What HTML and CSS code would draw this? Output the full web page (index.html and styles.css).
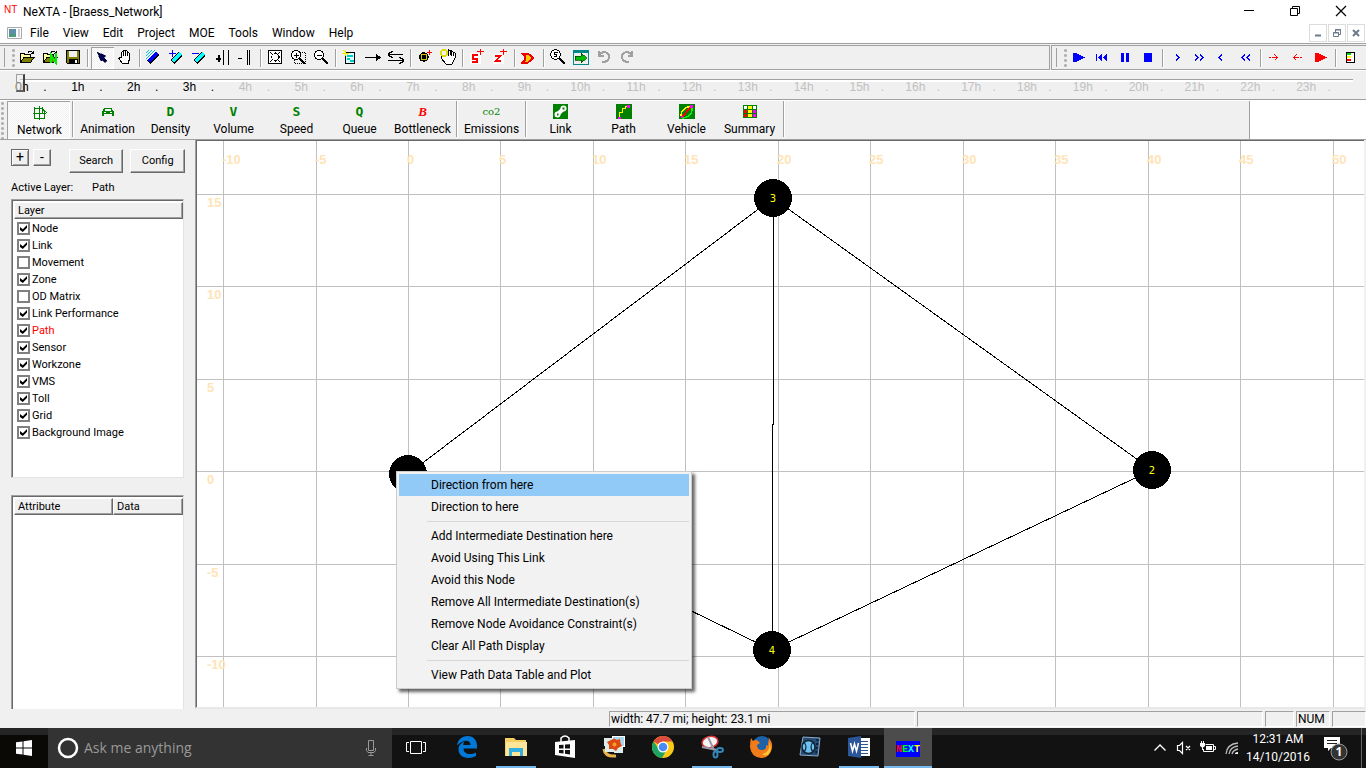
FILE: index.html
```html
<!DOCTYPE html>
<html lang="en">
<head>
<meta charset="utf-8">
<title>NeXTA - [Braess_Network]</title>
<link rel="stylesheet" href="styles.css">
</head>
<body>
<div class="desktop">
<header class="titlebar">
  <span class="app-mark">NT</span>
  <h1 class="title">NeXTA - [Braess_Network]</h1>
  <div class="win-buttons">
    <button aria-label="Minimize"><svg width="12" height="12" viewBox="0 0 12 12"><path d="M1 5.500H11" stroke="#000"/></svg></button>
    <button aria-label="Restore"><svg width="12" height="12" viewBox="0 0 12 12"><path d="M1.500 3.500H8.500V10.500H1.500ZM3.500 3V1.500H10.500V8.500H9" fill="none" stroke="#000"/></svg></button>
    <button aria-label="Close"><svg width="12" height="12" viewBox="0 0 12 12"><path d="M1 1L11 11M11 1L1 11" stroke="#000" stroke-width="1.200"/></svg></button>
  </div>
</header>
<nav class="menubar">
  <svg class="doc-icon" width="16" height="14" viewBox="0 0 16 14"><path d="M.5 1.500H14.500V12.500H.5Z" fill="#fff" stroke="#aaa"/><path d="M2 3H9V11H2Z" fill="#5f8fa8"/><path d="M2 8H9V11H2Z" fill="#4f9a78"/><path d="M11 3H13V11H11Z" fill="#ccd"/></svg>
  <button>File</button><button>View</button><button>Edit</button><button>Project</button><button>MOE</button><button>Tools</button><button>Window</button><button>Help</button>
  <div class="mdi-buttons">
    <button aria-label="Minimize document"><svg width="10" height="10" viewBox="0 0 10 10"><path d="M2 7.500H8" stroke="#6b7b8c" stroke-width="2"/></svg></button>
    <button aria-label="Restore document"><svg width="10" height="10" viewBox="0 0 10 10"><path d="M1.500 4.500H6.500V8.500H1.500ZM3.500 4V1.500H8.500V6.500H7M1 5H7M3 2H9" fill="none" stroke="#6b7b8c"/></svg></button>
    <button aria-label="Close document"><svg width="10" height="10" viewBox="0 0 10 10"><path d="M2 2L8 8M8 2L2 8" stroke="#6b7b8c" stroke-width="2"/></svg></button>
  </div>
</nav>
<div class="rebar">
  <div class="band band-main" role="toolbar" aria-label="Standard">
    <span class="grip"></span>
    <button aria-label="Open"><svg viewBox="0 0 16 16"><path d="M1.500 13V4.500H5L6 5.500H11V8" fill="#ffff9c" stroke="#000"/><path d="M1.500 13.500L5 8.500H15L11.500 13.500Z" fill="#808000" stroke="#000"/><path d="M9 3.500C10 1.500 12.500 1.500 14 4M14.500 1.500V4.500H11.500" fill="none" stroke="#000"/></svg></button>
    <button aria-label="Open network"><svg viewBox="0 0 16 16"><path d="M1.500 13V4.500H5L6 5.500H11V8" fill="#ffff9c" stroke="#000"/><path d="M1.500 13.500L5 8.500H15L11.500 13.500Z" fill="#808000" stroke="#000"/><path d="M9 3.500C10 1.500 12.500 1.500 14 4M14.500 1.500V4.500H11.500" fill="none" stroke="#000"/><path d="M8.500 14V5L13.500 13V4" fill="none" stroke="#0e0" stroke-width="2"/></svg></button>
    <button aria-label="Save"><svg viewBox="0 0 16 16"><path d="M1.500 1.500H14.500V14.500H2.500L1.500 13.500Z" fill="#808000" stroke="#000"/><path d="M4 2H12V8H4Z" fill="#eee"/><path d="M4 10H13V15H4Z"/><path d="M10 11H12V14H10Z" fill="#fff"/></svg></button>
    <i class="sep"></i>
    <button class="on" aria-label="Select"><svg viewBox="0 0 16 16"><path d="M3 3L12 7L10 8.500L13 12L11 13.500L8.500 10.500L7 12Z" fill="#000050" stroke="#000030" stroke-width=".5"/></svg></button>
    <button aria-label="Pan"><svg viewBox="0 0 16 16"><path d="M4.500 9V3.500Q5.500 2 6.500 3.500V7V2Q7.500 .5 8.500 2V7V2.500Q9.500 1 10.500 2.500V7V4.500Q11.500 3 12.500 4.500V10L11 14.500H5.500L2 9.500Q1.500 7.500 4.500 9" fill="#fff" stroke="#000"/></svg></button>
    <i class="sep"></i>
    <button aria-label="Draw link"><svg viewBox="0 0 16 16"><path d="M0 10L9 1M0 7L6 1M0 4L3 1" stroke="#0cd" fill="none"/><path d="M2.500 13.500L11.500 4.500" stroke="#000" stroke-width="5"/><path d="M2.500 12.500L11 4" stroke="#00f" stroke-width="3"/></svg></button>
    <button aria-label="Add link"><svg viewBox="0 0 16 16"><path d="M0 4.500H7M3.500 1V8" stroke="#00f"/><path d="M3.500 13L11.500 5" stroke="#000" stroke-width="5"/><path d="M3.500 12.500L11.500 4.500" stroke="#0ff" stroke-width="3"/></svg></button>
    <button aria-label="Remove link"><svg viewBox="0 0 16 16"><path d="M0 4.500H7" stroke="#00f"/><path d="M3.500 13L11.500 5" stroke="#000" stroke-width="5"/><path d="M3.500 12.500L11.500 4.500" stroke="#0ff" stroke-width="3"/></svg></button>
    <button aria-label="Add lane"><svg viewBox="0 0 16 16"><path d="M1 9.500H6M3.500 6V13" stroke="#000" stroke-width="2"/><path d="M8.500 1V16M13.500 1V16" stroke="#000"/></svg></button>
    <button aria-label="Remove lane"><svg viewBox="0 0 16 16"><path d="M0 9.500H4" stroke="#000"/><path d="M9.500 1V16M11.500 1V16" stroke="#000"/></svg></button>
    <i class="sep"></i>
    <button aria-label="Fit"><svg viewBox="0 0 16 16"><path d="M1.500 1.500H14.500V14.500H1.500Z" fill="#fff" stroke="#000" stroke-width="1.500"/><path d="M8 3L10 5H6ZM8 13L10 11H6ZM3 8L5 6V10ZM13 8L11 6V10Z"/><path d="M3 3L6 6M13 3L10 6M3 13L6 10M13 13L10 10" stroke="#000"/></svg></button>
    <button aria-label="Zoom in"><svg viewBox="0 0 16 16"><path d="M4 3.500H15.500V14.500H4.500V11" fill="none" stroke="#000" stroke-dasharray="1 1"/><circle cx="6" cy="6" r="4.500" fill="#fff" stroke="#000"/><path d="M3.500 6.500H8.500M6.500 3.500V8.500" stroke="#000"/><path d="M9.500 9.500L15 15" stroke="#000" stroke-width="2"/></svg></button>
    <button aria-label="Zoom out"><svg viewBox="0 0 16 16"><circle cx="6" cy="6" r="4.500" fill="#fff" stroke="#000"/><path d="M3.500 6.500H8.500" stroke="#000"/><path d="M9.500 9.500L15 15" stroke="#000" stroke-width="2"/></svg></button>
    <i class="sep"></i>
    <button aria-label="New node"><svg viewBox="0 0 16 16"><path d="M3.500 3.500H12.500V14.500H3.500Z" fill="#dff" stroke="#000"/><path d="M5 7H11M5 10H8M8 12H12" stroke="#0cc" stroke-width="2"/><path d="M0 4H7M3.500 1V7M1 1L6 6" stroke="#ee0"/></svg></button>
    <button aria-label="One way"><svg viewBox="0 0 16 16"><path d="M0 8.500H13" stroke="#000" stroke-width="1.500"/><path d="M10.500 4.500L16 8.500L10.500 12.500Z"/></svg></button>
    <button aria-label="Two way"><svg viewBox="0 0 16 16"><path d="M0 5.500H15M0 11.500H15M4.500 2L0 5.500L4.500 9M11.500 8L16 11.500L11.500 15" fill="none" stroke="#000" stroke-width="1.400"/></svg></button>
    <i class="sep"></i>
    <button aria-label="Add zone"><svg viewBox="0 0 16 16"><path d="M6.500 2.500L9 4L11 5L12 8L10.500 11L7 13L3 11.500L1.500 8L3 5Z" fill="#000"/><circle cx="7" cy="8" r="3" fill="none" stroke="#cc0"/><path d="M10 3.500H15M12.500 1V6" stroke="#f00"/></svg></button>
    <button aria-label="Move node"><svg viewBox="0 0 16 16"><path d="M4 8L1 6V9L6 15H12L15 9V4L13 3V7M13 7V3L11 1.500V7M10.500 6V2L8.500 1L8 7" fill="#fff" stroke="#000"/><circle cx="4" cy="4" r="3" fill="none" stroke="#dd0" stroke-width="1.500"/></svg></button>
    <i class="sep"></i>
    <button aria-label="Add sensor"><svg viewBox="0 0 16 16"><path d="M1 4H12V15H1Z" fill="#fff"/><path d="M9 6H4V9.500H8V13H3" fill="none" stroke="#f00" stroke-width="2"/><path d="M8 2.500H15M11.500 0V6" stroke="#f00"/></svg></button>
    <button aria-label="Add zone label"><svg viewBox="0 0 16 16"><path d="M1 5H12V15H1Z" fill="#fff"/><path d="M3 7H8L4 12H9" fill="none" stroke="#f00" stroke-width="2"/><path d="M8 2.500H15M11.500 0V6" stroke="#f00"/></svg></button>
    <i class="sep"></i>
    <button aria-label="Subarea"><svg viewBox="0 0 16 16"><path d="M1 4.500H7L12 9L7 13.500H1L4 11V7Z" fill="#fc0" stroke="#e00" stroke-width="2"/></svg></button>
    <i class="sep"></i>
    <button aria-label="Find"><svg viewBox="0 0 16 16"><circle cx="5.500" cy="5.500" r="4.800" fill="#fff" stroke="#000"/><path d="M7.500 3.500H4.500V5.500H6.500V7.500H4" fill="none" stroke="#000"/><path d="M9.500 9.500L15 15" stroke="#000" stroke-width="2"/></svg></button>
    <button aria-label="Go"><svg viewBox="0 0 16 16"><path d="M.5 1.500H15.500V15.500H.5Z" fill="#eee" stroke="#088"/><path d="M1 3H15" stroke="#088" stroke-width="2"/><path d="M2 7H8V4L14 9L8 14V11H2Z" fill="#0b0" stroke="#030" stroke-width=".7"/></svg></button>
    <button aria-label="Undo"><svg viewBox="0 0 16 16"><path d="M3 2V6.500H7.500M3.500 6C6 2 13 2 13 8Q12.500 13 6 13" fill="none" stroke="#a0a0a0" stroke-width="2"/></svg></button>
    <button aria-label="Redo"><svg viewBox="0 0 16 16"><path d="M13 2V6.500H8.500M12.500 6C10 2 3 2 3 8Q3.500 13 10 13" fill="none" stroke="#a0a0a0" stroke-width="2"/></svg></button>
  </div>
  <div class="band band-play" role="toolbar" aria-label="Playback">
    <span class="grip"></span>
    <button aria-label="Play"><svg viewBox="0 0 16 16"><path d="M2 4H5L14 8.500L5 13H2Z" fill="#00f"/></svg></button>
    <button aria-label="Rewind"><svg viewBox="0 0 16 16"><path d="M2.500 5V12" stroke="#00f"/><path d="M8 5V12L4 8.500ZM13 5V12L9 8.500Z" fill="#00f"/></svg></button>
    <button aria-label="Pause"><svg viewBox="0 0 16 16"><path d="M4 4H7V13H4ZM9 4H12V13H9Z" fill="#00f"/></svg></button>
    <button aria-label="Stop"><svg viewBox="0 0 16 16"><path d="M4 4H12V13H4Z" fill="#00f"/></svg></button>
    <i class="sep"></i>
    <button aria-label="Forward"><svg viewBox="0 0 16 16"><path d="M7 5.500L10 8.500L7 11.500" fill="none" stroke="#00f" stroke-width="1.500"/></svg></button>
    <button aria-label="Fast forward"><svg viewBox="0 0 16 16"><path d="M3 5.500L6 8.500L3 11.500M8 5.500L11 8.500L8 11.500" fill="none" stroke="#00f" stroke-width="1.500"/></svg></button>
    <button aria-label="Back"><svg viewBox="0 0 16 16"><path d="M7 5.500L4 8.500L7 11.500" fill="none" stroke="#00f" stroke-width="1.500"/></svg></button>
    <button aria-label="Fast back"><svg viewBox="0 0 16 16"><path d="M7 5.500L4 8.500L7 11.500M12 5.500L9 8.500L12 11.500" fill="none" stroke="#00f" stroke-width="1.500"/></svg></button>
    <i class="sep"></i>
    <button aria-label="Next step"><svg viewBox="0 0 16 16"><path d="M2 8.500H4M5 8.500H10M7.500 5.500L10.500 8.500L7.500 11.500" fill="none" stroke="#f00" stroke-width="1.400"/></svg></button>
    <button aria-label="Previous step"><svg viewBox="0 0 16 16"><path d="M12 8.500H10M9 8.500H4M6.500 5.500L3.500 8.500L6.500 11.500" fill="none" stroke="#f00" stroke-width="1.400"/></svg></button>
    <button aria-label="Record"><svg viewBox="0 0 16 16"><path d="M2 4H5L14 8.500L5 13H2Z" fill="#f00"/></svg></button>
    <i class="sep"></i>
    <button aria-label="Signal"><svg viewBox="0 0 16 16"><path d="M4 3.500H12V13.500H4Z" fill="#fff" stroke="#000"/><path d="M5 4H9V6H5Z" fill="#0d0"/><path d="M5 7H9V9H5Z" fill="#ff0"/><path d="M5 10H9V12H5Z" fill="#f00"/></svg></button>
  </div>
</div>
<div class="timeband">
  <ol class="hours" id="hours"></ol>
  <input type="range" min="0" max="24" value="0" aria-label="Time of day">
</div>
<div class="viewbar">
  <div class="viewtools" role="toolbar" aria-label="Views">
    <button class="on"><svg viewBox="0 0 16 16"><path d="M2.500 2V14M7.500 1V15M12.500 6V14M1 8.500H14M2 13.500H13M3 3.500H10L15 8M10.500 2V8" fill="none" stroke="#008000"/></svg>Network</button>
    <i class="sep"></i>
    <button><svg viewBox="0 0 16 16"><path d="M4 4H12L13 7H14V12H12V10H4V12H2V7H3Z" fill="#008000"/><path d="M5 5H11V7H5ZM4 8H6V9H4ZM10 8H12V9H10Z" fill="#f0f0f0"/></svg>Animation</button>
    <button><b class="glyph">D</b>Density</button>
    <button><b class="glyph">V</b>Volume</button>
    <button><b class="glyph">S</b>Speed</button>
    <button><b class="glyph">Q</b>Queue</button>
    <button><b class="glyph red">B</b>Bottleneck</button>
    <i class="sep"></i>
    <button><span class="glyph co">co2</span>Emissions</button>
    <i class="sep"></i>
    <button><svg viewBox="0 0 16 16"><path d="M0 0H15V15H0Z" fill="#008000"/><g shape-rendering="auto"><path d="M4.500 10.500L10.500 4.500" stroke="#fff" stroke-width="4"/><circle cx="10.500" cy="4.500" r="3" fill="#fff"/><circle cx="4.500" cy="10.500" r="3" fill="#fff"/><path d="M9.500 4.500H11.500M4 10.500H5.500" stroke="#008000" stroke-width="2"/></g></svg>Link</button>
    <button><svg viewBox="0 0 16 16"><path d="M0 0H16V15H0Z" fill="#008000"/><path d="M3.500 13V8.500H6.500V4.500H9.500V2.500H11" fill="none" stroke="#ff0"/><path d="M11 1H14V4H11ZM2 13H5V15H2Z" fill="#f0f"/></svg>Path</button>
    <button><svg viewBox="0 0 16 16"><path d="M0 0H16V15H0Z" fill="#008000"/><path d="M2 12Q2 4 12 2" fill="none" stroke="#ff0" stroke-width="1.500"/><path d="M3 13L12 3" stroke="#f00" stroke-width="2"/><path d="M3 14Q14 13 13 3" fill="none" stroke="#0f0" stroke-width="1.500"/><path d="M11 1H14V4H11ZM2 12H4V14H2Z" fill="#f0f"/></svg>Vehicle</button>
    <button><svg viewBox="0 0 16 16"><path d="M1 1H15V14H1Z" fill="#fff"/><path d="M6 1H10V14H6Z" fill="#ff0"/><path d="M1 5H6V14H1Z" fill="#f00"/><path d="M10 5H15V14H10Z" fill="#f0f"/><path d="M1.500 1.500H14.500V13.500H1.500ZM5.500 1V14M10.500 1V14M1 5.500H15M1 9.500H15" fill="none" stroke="#008000"/></svg>Summary</button>
    <i class="sep"></i>
  </div>
</div>
<main class="work">
  <aside class="sidebar">
    <div class="side-tools">
      <button class="push small default">+</button><button class="push small">-</button>
      <button class="push wide">Search</button><button class="push wide">Config</button>
    </div>
    <p class="active-layer"><span>Active Layer:</span><span>Path</span></p>
    <div class="listbox layers">
      <div class="list-head">Layer</div>
      <label><input type="checkbox" checked>Node</label>
      <label><input type="checkbox" checked>Link</label>
      <label><input type="checkbox">Movement</label>
      <label><input type="checkbox" checked>Zone</label>
      <label><input type="checkbox">OD Matrix</label>
      <label><input type="checkbox" checked>Link Performance</label>
      <label class="current"><input type="checkbox" checked>Path</label>
      <label><input type="checkbox" checked>Sensor</label>
      <label><input type="checkbox" checked>Workzone</label>
      <label><input type="checkbox" checked>VMS</label>
      <label><input type="checkbox" checked>Toll</label>
      <label><input type="checkbox" checked>Grid</label>
      <label><input type="checkbox" checked>Background Image</label>
    </div>
    <div class="listbox attributes">
      <table><thead><tr><th>Attribute</th><th>Data</th></tr></thead></table>
    </div>
  </aside>
  <section class="canvas">
    <svg class="map" role="img" aria-label="Braess network">
      <g transform="translate(-197 -141)">
        <g id="grid" class="grid"></g>
        <g class="links">
          <path d="M408 474L773 198L1152 470L772 650L408 474M773.500 198V424L772.500 425V650"/>
        </g>
        <g class="nodes">
          <circle cx="408" cy="474" r="19"/><circle cx="773" cy="198" r="19"/><circle cx="1152" cy="470" r="19"/><circle cx="772" cy="650" r="19"/>
          <text x="773" y="202">3</text><text x="1152" y="474">2</text><text x="772" y="654">4</text>
        </g>
      </g>
    </svg>
    <div class="context-menu" role="menu">
      <button role="menuitem" class="hot">Direction from here</button>
      <button role="menuitem">Direction to here</button>
      <hr>
      <button role="menuitem">Add Intermediate Destination here</button>
      <button role="menuitem">Avoid Using This Link</button>
      <button role="menuitem">Avoid this Node</button>
      <button role="menuitem">Remove All Intermediate Destination(s)</button>
      <button role="menuitem">Remove Node Avoidance Constraint(s)</button>
      <button role="menuitem">Clear All Path Display</button>
      <hr>
      <button role="menuitem">View Path Data Table and Plot</button>
    </div>
  </section>
</main>
<footer class="statusbar">
  <span class="pane size">width: 47.7 mi; height: 23.1 mi</span><span class="pane grow"></span><span class="pane key"></span><span class="pane num">NUM</span><span class="pane num"></span>
</footer>
<div class="taskbar">
  <button class="start" aria-label="Start"><svg width="16" height="16" viewBox="0 0 16 16"><path d="M0 2.300L6.500 1.400V7.500H0ZM7.500 1.200L16 0V7.500H7.500ZM0 8.500H6.500V14.600L0 13.700ZM7.500 8.500H16V16L7.500 14.800Z" fill="#fff"/></svg></button>
  <div class="cortana">
    <svg width="22" height="22" viewBox="0 0 22 22"><circle cx="11" cy="11" r="9" fill="none" stroke="#fff" stroke-width="2.500"/></svg>
    <input type="text" placeholder="Ask me anything" aria-label="Ask me anything">
    <svg width="12" height="18" viewBox="0 0 12 18"><path d="M3.500 1.500H8.500V11.500H3.500ZM1.500 9V11.500L3 13.500H9L10.500 11.500V9M6 14V16.500M3.500 16.500H8.500" fill="none" stroke="#999"/></svg>
  </div>
  <div class="apps">
    <button class="taskview" aria-label="Task view"><svg width="20" height="16" viewBox="0 0 20 16"><path d="M4.500 2.500H15.500V14.500H4.500ZM3 3.500H.5V12.500H3M17 3.500H19.500V12.500H17" fill="none" stroke="#fff"/></svg></button>
    <button aria-label="Edge"><svg width="24" height="24" viewBox="0 0 24 24"><path d="M2 10.500C3 4.500 7 1 12.500 1C19 1 22 6 22 10.500V13.500H8.500C8.500 19 15 20.500 21 17.500V21C13 25 3.500 22.500 3.500 14.500C3.500 10.500 6 8 9.500 6.500C8.600 7.500 8.400 8.800 8.300 10H15.500C15.500 4.500 8 4 2 10.500Z" fill="#0078d7"/></svg></button>
    <button class="running" aria-label="File Explorer"><svg width="24" height="24" viewBox="0 0 24 24"><path d="M1 3H10L12 5H22V21H1Z" fill="#f6cf63"/><path d="M2 7H23V21H2Z" fill="#ffe59a"/><path d="M5 21V13H19V21H16V17H8V21Z" fill="#35aee0"/></svg></button>
    <button aria-label="Store"><svg width="24" height="24" viewBox="0 0 24 24"><path d="M8 7V3Q12-1 16 3V7" fill="none" stroke="#fff" stroke-width="1.500"/><path d="M2 7L22 5V23L2 20Z" fill="#fff"/><path d="M6 10L10.500 9.700V13.500H6ZM12 9.600L17 9.200V13.500H12ZM6 15H10.500V18.500L6 18ZM12 15H17V19.500L12 18.700Z" fill="#111"/></svg></button>
    <button aria-label="Photo Gallery"><svg width="24" height="24" viewBox="0 0 24 24"><path d="M2 14Q3 22 14 21" fill="none" stroke="#e9b54a" stroke-width="3"/><path d="M2 3H13V11H2ZM12 10H21V18H12ZM3 10H12V17H3Z" fill="#dcecea"/><path d="M10 1H23V12H10Z" fill="#fff"/><path d="M11 2H22V11H11Z" fill="#a8d4ec"/><path d="M9 5L12 3.500L15 5L18 4L18.500 8L20 11L16 13L14 16L11 14L7 14L7 10L5 7Z" fill="#dc4a12"/><circle cx="12.500" cy="9.500" r="2" fill="#f9a02c"/></svg></button>
    <button aria-label="Chrome"><svg width="24" height="24" viewBox="0 0 24 24"><circle cx="12" cy="12" r="11" fill="#fbc916"/><path d="M12 12L2.500 6.500A11 11 0 0 1 21.500 6.500H12Z" fill="#dd4b3e"/><path d="M2.500 6.500A11 11 0 0 0 11 23L16 14H8Z" fill="#1da462"/><circle cx="12" cy="12" r="5.500" fill="#fff"/><circle cx="12" cy="12" r="4.300" fill="#4a8af4"/></svg></button>
    <button class="running" aria-label="Snipping Tool"><svg width="24" height="24" viewBox="0 0 24 24"><ellipse cx="10" cy="7" rx="8" ry="5.500" fill="#f5f5f5" stroke="#d33" stroke-width="1.500" transform="rotate(-12 10 7)"/><path d="M8 2L14 15M2 12L17 15" stroke="#99a" stroke-width="2"/><ellipse cx="20" cy="15" rx="3" ry="2" fill="none" stroke="#38b" stroke-width="2"/><ellipse cx="15.500" cy="19.500" rx="2" ry="3" fill="none" stroke="#38b" stroke-width="2"/></svg></button>
    <button aria-label="Firefox"><svg width="24" height="24" viewBox="0 0 24 24"><circle cx="13" cy="11" r="10" fill="#1d62a8"/><path d="M2 3L4 6Q7 4 9 6L11 8L8 10Q8 15 13 15Q18 15 17 10Q20 12 19 7Q21 5 19 2Q24 7 23 13Q21 23 12 23Q2 22 1 12Q1 7 2 3Z" fill="#f07b18"/><path d="M20 7Q22 17 13 19Q18 23 21 17Q23 13 20 7Z" fill="#fdc52f"/></svg></button>
    <button aria-label="Media"><svg width="24" height="24" viewBox="0 0 24 24"><path d="M5 2L22 3L20 21L2 20Z" fill="#294d72" stroke="#8ac" stroke-width="1"/><circle cx="10.500" cy="12" r="6.500" fill="#6bc1ef" stroke="#123" stroke-width="1.500"/><path d="M6 7Q10 12 6 17M15 7Q11 12 15 17" fill="none" stroke="#123" stroke-width="1.200"/><path d="M19.500 4L18 20" stroke="#0b1c3c" stroke-width="2" stroke-dasharray="2 2"/></svg></button>
    <button class="running" aria-label="Word"><svg width="24" height="24" viewBox="0 0 24 24"><path d="M12 3H23V21H12Z" fill="#fff"/><path d="M14 6.500H21M14 9.500H21M14 12.500H21M14 15.500H21M14 18.500H21" stroke="#2b579a"/><path d="M1 3L14 1V23L1 21Z" fill="#2b579a"/><path d="M3.500 8L5.500 16L7.500 9L9.500 16L11.500 8" fill="none" stroke="#fff" stroke-width="1.600"/></svg></button>
    <button class="running focused" aria-label="NeXTA"><span class="next"><b>N</b><b>E</b><b>X</b><b>T</b></span></button>
  </div>
  <div class="tray">
    <button aria-label="Show hidden icons"><svg width="16" height="16" viewBox="0 0 16 16"><path d="M2.500 10.500L8 5L13.500 10.500" fill="none" stroke="#fff" stroke-width="1.400"/></svg></button>
    <button aria-label="Volume muted"><svg width="16" height="16" viewBox="0 0 16 16"><path d="M1.500 5.500H3.500L6.500 2.500V13.500L3.500 10.500H1.500ZM10 6L14 10M14 6L10 10" fill="none" stroke="#fff" stroke-width="1.200"/></svg></button>
    <button aria-label="Battery"><svg width="18" height="16" viewBox="0 0 18 16"><path d="M6.500 4.500H14.500V11.500H4.500V9M15 6.500H16.500V9.500H15" fill="none" stroke="#fff"/><path d="M7 6H13V10H7Z" fill="#fff"/><path d="M2.500 1V3M4.500 1V3" fill="none" stroke="#fff"/><path d="M1 3H6V6L4 7.500V10H3V7.500L1 6Z" fill="#fff"/></svg></button>
    <button aria-label="Wireless"><svg width="16" height="16" viewBox="0 0 16 16"><path d="M2 14Q3 4 14 3M5 14Q6 7 14 6M8 14Q9 10 14 9" fill="none" stroke="#bbb" stroke-width="1.300"/><path d="M11 14Q11 12 14 12V14Z" fill="#fff"/></svg></button>
    <time class="clock"><span>12:31 AM</span><span>14/10/2016</span></time>
    <button class="notes" aria-label="Notifications"><svg width="26" height="28" viewBox="0 0 26 28"><path d="M1 3H17V14H8L5 17V14H1Z" fill="#fff"/><path d="M4 6.500H14M4 9.500H14" stroke="#222"/><circle cx="16" cy="18" r="8" fill="#333" stroke="#999"/><text x="16" y="22" text-anchor="middle" class="badge">1</text></svg></button>
  </div>
</div>
</div>
<script src="main.js"></script>
</body>
</html>
```

FILE: styles.css
```css
* { box-sizing: border-box; }
body { margin: 0; font: 12px/16px Roboto, "Noto Sans", sans-serif; color: #000; }
button { border: 0; padding: 0; margin: 0; background: none; font: inherit; color: inherit; }
svg { display: block; }
.desktop { display: flex; flex-direction: column; height: 100vh; background: #f0f0f0; overflow: hidden; }

.titlebar { display: flex; align-items: center; height: 22px; background: #fff; padding-left: 4px; }
.app-mark { width: 19px; font: 10px/12px "Liberation Sans", sans-serif; color: #f00; padding-bottom: 3px; }
.title { margin: 0; font-size: 12px; font-weight: 400; line-height: 20px; padding-top: 2px; }
.win-buttons { display: flex; margin-left: auto; padding-right: 2px; }
.win-buttons button { width: 46px; height: 20px; display: grid; place-items: center; }

.menubar { display: flex; align-items: center; height: 21px; background: #fff; padding-left: 7px; }
.menubar > button { padding: 0 7px; height: 19px; }
.mdi-buttons { display: flex; gap: 1px; margin-left: auto; padding-right: 1px; }
.mdi-buttons button { width: 18px; height: 18px; border: 1px solid #dcdcdc; display: grid; place-items: center; }

.rebar { display: flex; border-top: 1px solid #a0a0a0; border-bottom: 1px solid #fff; padding-top: 1px; }
.band { display: flex; align-items: center; height: 25px; border-top: 1px solid #a0a0a0; border-bottom: 1px solid #a0a0a0; }
.band-main { flex: 1; border-right: 1px solid #a0a0a0; margin-right: 1px; }
.band-play { border-left: 1px solid #a0a0a0; width: 315px; }
.grip { width: 12px; height: 19px; margin-left: 4px; border-left: 1px solid #a0a0a0; background: radial-gradient(circle, #b0b0b0 1px, transparent 2px) 6px 0 / 5px 5px repeat-y; }
.band button { width: 23px; height: 22px; display: grid; place-items: start; padding: 2px 0 0 3px; flex: none; }
.band svg { width: 16px; height: 16px; shape-rendering: crispEdges; }
.on { background: repeating-conic-gradient(#fff 0 25%, #f0f0f0 0 50%) 0 0 / 2px 2px; box-shadow: inset 1px 1px #a0a0a0, inset -1px -1px #fff; }
.sep { width: 6px; height: 18px; flex: none; background: linear-gradient(90deg, transparent 2px, #a0a0a0 2px 3px, #fff 3px 4px, transparent 4px); }

.timeband { display: grid; height: 30px; border-bottom: 1px solid #fff; box-shadow: inset 0 -1px #a0a0a0; padding: 0 13px 0 8px; }
.timeband input { grid-area: 1 / 1; appearance: none; margin: 0 0 0 8px; height: 24px; background: linear-gradient(#a0a0a0 1px, #fff 1px) 4px 8px / 100% 3px no-repeat; }
.timeband input::-webkit-slider-thumb { appearance: none; width: 9px; height: 18px; background: rgba(240, 240, 240, .5); border: 1px solid #a0a0a0; border-right: 2px solid #404040; border-bottom: 2px solid #606060; }
.hours { grid-area: 1 / 1; display: grid; grid-template-columns: repeat(24, 1fr); margin: 0; padding: 8px 5px 0 0; list-style: none; pointer-events: none; font: 12px/17px "Liberation Sans", Arial, sans-serif; color: #c0c0c0; }
.hours li { display: grid; grid-template-columns: 28px 18px; justify-items: center; }
.hours li.past { color: #000; }

.viewbar { display: flex; height: 39px; background: #fff; border-bottom: 1px solid #a0a0a0; }
.viewtools { display: flex; width: 1250px; background: #f0f0f0; border-right: 1px solid #a0a0a0; padding-left: 7px; background-image: radial-gradient(circle, #b0b0b0 1px, transparent 2px); background-size: 5px 5px; background-repeat: repeat-y; }
.viewtools button { width: 63px; display: flex; flex-direction: column; align-items: center; padding-top: 3px; line-height: 18px; white-space: nowrap; }
.viewtools button.on { padding: 4px 0 0 2px; }
.viewtools button svg, .glyph { width: 16px; height: 16px; shape-rendering: crispEdges; }
.viewtools .sep { height: 36px; }
.glyph { font: 700 13px/16px "DejaVu Sans Mono", monospace; color: #008000; text-align: center; }
.glyph.red { color: #f00; font-family: "Liberation Serif", serif; font-style: italic; }
.glyph.co { width: auto; font: 10px/16px "DejaVu Serif", serif; }

.work { flex: 1; display: flex; min-height: 0; }
.sidebar { width: 195px; flex: none; padding: 9px 10px 0 11px; font-size: 11px; display: flex; flex-direction: column; }
.side-tools { display: flex; align-items: flex-start; }
.push { background: #f0f0f0; border: 1px solid; border-color: #fff #696969 #696969 #fff; box-shadow: inset -1px -1px #a0a0a0; text-align: center; }
.push.small { width: 18px; height: 17px; margin-right: 4px; line-height: 13px; font-size: 14px; }
.push.default { border-color: #696969; box-shadow: inset 1px 1px #fff, inset -1px -1px #a0a0a0; }
.push.wide { width: 55px; height: 24px; margin-left: 7px; }
.push.small + .push.wide { margin-left: 14px; }
.active-layer { display: flex; gap: 17px; margin: 7px 0 3px; }
.active-layer span:first-child { width: 64px; }
.listbox { background: #fff; border: 1px solid; border-color: #a0a0a0 #e3e3e3 #e3e3e3 #a0a0a0; box-shadow: inset 1px 1px #696969; padding: 2px 0 1px 2px; width: 173px; }
.layers { height: 279px; flex: none; }
.list-head, th { background: #f0f0f0; border: 1px solid; border-color: #fff #696969 #696969 #fff; box-shadow: inset -1px -1px #a0a0a0; font-weight: 400; text-align: left; height: 17px; line-height: 15px; padding: 0 3px; }
.list-head { margin-bottom: 1px; }
.layers label { display: flex; align-items: center; gap: 2px; height: 17px; padding-left: 3px; }
.layers .current { color: #f00; }
.layers input { appearance: none; width: 13px; height: 13px; margin: 0; border: 2px solid #808080; background: #fff; display: grid; place-items: center; }
.layers input:checked::after { content: ""; width: 7px; height: 7px; background: #000; clip-path: polygon(0 30%, 40% 62%, 100% 0, 100% 40%, 40% 100%, 0 70%); }
.attributes { margin-top: 17px; flex: 1; border-bottom: 0; }
.attributes table { width: 100%; border-collapse: separate; border-spacing: 0; table-layout: fixed; }
.attributes th:first-child { width: 99px; }

.canvas { flex: 1; position: relative; background: #fff; overflow: hidden; border-left: 1px solid #a0a0a0; box-shadow: inset 1px 1px #696969; padding: 1px 0 0 1px; border-right: 2px solid #f0f0f0; border-bottom: 2px solid #e8e8e8; }
.map { width: 100%; height: 100%; }
.grid path { stroke: #c0c0c0; fill: none; shape-rendering: crispEdges; }
.grid text { font: 700 13px "Liberation Sans", sans-serif; fill: #ffe4b5; }
.links path { fill: none; stroke: #000; shape-rendering: crispEdges; }
.nodes circle { shape-rendering: crispEdges; }
.nodes text { font: 10px "DejaVu Sans", sans-serif; fill: #ff0; text-anchor: middle; }

.context-menu { position: absolute; left: 200px; top: 331px; width: 296px; padding: 2px; background: #f2f2f2; border: 1px solid #ccc; box-shadow: 3px 3px 3px rgba(0, 0, 0, .6); }
.context-menu button { display: block; width: 100%; height: 22px; padding-left: 32px; text-align: left; white-space: nowrap; }
.context-menu .hot { background: #91c9f7; }
.context-menu hr { margin: 3px 0 3px 28px; border: 0; height: 1px; background: #d7d7d7; }

.statusbar { display: flex; gap: 2px; height: 19px; padding: 2px 0 1px 609px; }
.pane { border: 1px solid; border-color: #a0a0a0 #fff #fff #a0a0a0; line-height: 15px; padding: 0 1px; white-space: nowrap; }
.pane.size { width: 306px; }
.pane.grow { flex: 1; }
.pane.key { width: 29px; }
.pane.num { width: 34px; }

.taskbar { display: flex; height: 40px; background: linear-gradient(#252525 7px, #121212 7px); color: #fff; flex: none; }
.start { width: 48px; display: grid; place-items: center; background: linear-gradient(#252525 7px, #0a0906 7px); }
.cortana { width: 344px; background: #333; display: flex; align-items: center; padding: 0 15px 0 9px; gap: 5px; }
.cortana input { flex: 1; min-width: 0; border: 0; padding: 0; background: none; font: 14px/20px "Open Sans", sans-serif; color: #fff; }
.cortana input::placeholder { color: #999; }
.apps { display: flex; gap: 1px; }
.apps button { width: 48px; display: grid; place-items: center; border-bottom: 2px solid transparent; }
.apps .taskview { margin-right: 2px; }
.apps .running { background: linear-gradient(#76b9ed, #76b9ed) center bottom / 40px 2px no-repeat border-box; }
.apps .focused { background: linear-gradient(#76b9ed, #76b9ed) center bottom / 100% 2px no-repeat border-box #4c4c4c; }
.next { display: flex; justify-content: center; width: 24px; height: 16px; margin-top: 3px; background: #00f; font: 700 10px/17px "Liberation Mono", monospace; color: #f00; }
.next b:nth-child(2) { color: #0f0; }
.next b:nth-child(3) { color: #0ff; }
.next b:nth-child(4) { color: #ff0; }
.tray { display: flex; align-items: center; margin-left: auto; padding-right: 4px; }
.tray > button { width: 24px; display: grid; place-items: center; }
.clock { display: flex; flex-direction: column; align-items: center; width: 68px; line-height: 18px; white-space: nowrap; }
.tray .notes { width: 50px; height: 40px; padding-right: 2px; border-right: 1px solid #666; }
.badge { font: 700 12px "Open Sans", sans-serif; fill: #fff; }
```

FILE: main.js
```js
const hours = document.getElementById("hours");
for (let h = 0; h < 24; h++) {
  const li = document.createElement("li");
  if (h < 4) li.className = "past";
  li.innerHTML = `<span>${h}h</span><span>.</span>`;
  hours.append(li);
}

const grid = document.getElementById("grid");
const step = 92.45;
let d = "", labels = "";
for (let i = 0; i < 13; i++) {
  const x = Math.round(223.1 + step * i);
  d += `M${x}.5 141V708`;
  labels += `<text x="${x - 1}" y="164">${-10 + 5 * i}</text>`;
}
for (let i = 0; i < 6; i++) {
  const y = Math.round(194 + step * i);
  d += `M197 ${y}.5H1364`;
  labels += `<text x="207" y="${y + 13}">${15 - 5 * i}</text>`;
}
grid.innerHTML = `<path d="${d}"/>${labels}`;
```
